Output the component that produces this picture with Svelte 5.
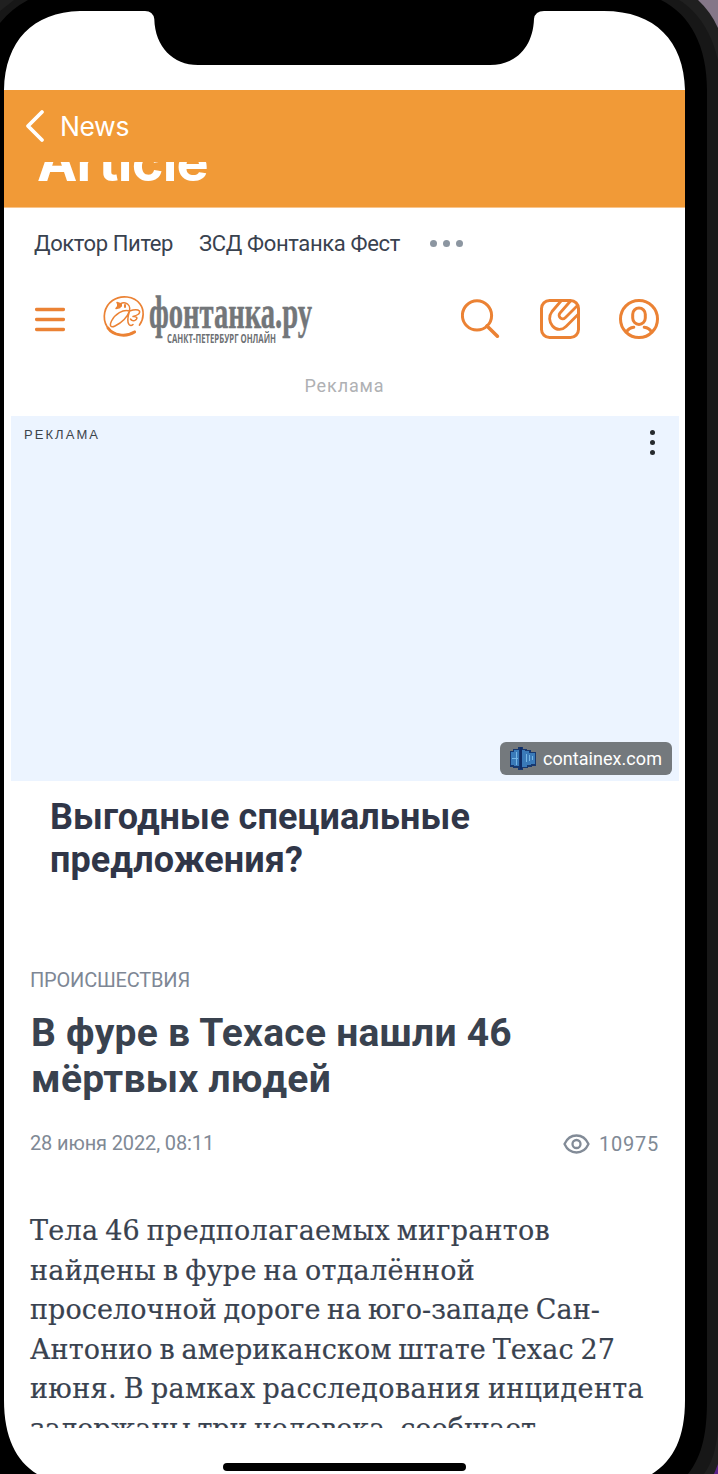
<script>
  const lines = [
    { text: 'Тела 46 предполагаемых мигрантов', width: 520 },
    { text: 'найдены в фуре на отдалённой', width: 445 },
    { text: 'проселочной дороге на юго-западе Сан-', width: 570 },
    { text: 'Антонио в американском штате Техас 27', width: 585 },
    { text: 'июня. В рамках расследования инцидента', width: 614 },
    { text: 'задержаны три человека, сообщает', width: 506 }
  ];

  // Spreads the letters of a one-line text to the given width.
  function fit(node, width) {
    const natural = node.getBoundingClientRect().width;
    const gaps = node.textContent.length;
    node.style.letterSpacing = `${(width - natural) / gaps}px`;
  }
</script>

<div class="phone">
  <div class="screen">
    <header class="nav">
      <div class="back">
        <svg width="20" height="34" viewBox="0 0 20 34"><path d="M17 3 3 17l14 14" fill="none" stroke="#fff" stroke-width="3.8" stroke-linecap="round" stroke-linejoin="round" /></svg>
        <span use:fit={69}>News</span>
      </div>
      <div class="title"><span use:fit={171}>Article</span></div>
    </header>

    <nav class="links">
      <span class="l1" use:fit={139}>Доктор Питер</span>
      <span use:fit={201}>ЗСД Фонтанка Фест</span>
      <i class="dots"><b></b><b></b><b></b></i>
    </nav>

    <div class="brandbar">
      <svg class="burger" width="30" height="26" viewBox="0 0 30 26"><path d="M1.5 2.5h27M1.5 12.5h27M1.5 22.5h27" stroke="#eb8234" stroke-width="3.3" stroke-linecap="round" /></svg>
      <svg class="logo" width="212" height="54" viewBox="0 0 212 54">
        <g fill="none" stroke="#eb8234" stroke-linecap="round" stroke-linejoin="round">
          <path d="M36.500 32C41 26 41.500 17 37 11 31 3 18 1.500 9.500 7.500 1 13.500-1 25 4 33.500 10 43 23 44.500 32 38.500" stroke-width="1.700" />
          <path d="M5 35c5 7.500 18 9.500 26.500 4" stroke-width="3" />
          <path d="M26.500 18C20 16 12 21 8.500 28c-2.500 5-.5 7 3.500 5 6-3 12-8 14.500-15 3-1 8-2 10 0 1 3-3 4.500-6.500 5.500 4-.5 5 2 2.500 3.500-2 1.500-4 .5-5-1M26.500 18c-1.500 5-2.500 11-.5 13.500 1.500 1.500 3 1 4 0" stroke-width="1.500" />
          <path d="M26.500 18c1-4-1-7-4-8-2-.8-3.500-.3-5 .8L14 9.500l1.500 3-2.500 3 4-1" stroke-width="1.500" />
          <path d="M15 11h3v2h-3zM22 12v2" stroke-width="2" />
        </g>
        <text class="wordmark" x="46" y="35" textLength="163" lengthAdjust="spacingAndGlyphs">фонтанка.ру</text>
        <text class="tagline" x="64" y="49.5" textLength="109" lengthAdjust="spacingAndGlyphs">САНКТ-ПЕТЕРБУРГ ОНЛАЙН</text>
      </svg>
      <div class="tools">
        <svg width="40" height="40" viewBox="0 0 40 40" fill="none" stroke="#eb8234" stroke-width="3"><circle cx="16" cy="16.400" r="14.6" /><path d="m26 27 10.400 10.200" stroke-width="3.6" stroke-linecap="round" /></svg>
        <svg width="40" height="40" viewBox="0 0 40 40" fill="none" stroke="#eb8234" stroke-width="3"><rect x="1.500" y="1.500" width="37" height="37" rx="8" /><path d="M21 2 12 12.500c-3.500 4.500-3 10.500.5 14.500 4 4.500 9.500 4.500 13.500.5L38 15.500M30.500 2 20 14c-3 3.500 2 8 5.500 4.500L38 6" stroke-width="2.800" /></svg>
        <svg width="40" height="40" viewBox="0 0 40 40" fill="none" stroke="#eb8234" stroke-width="3"><circle cx="20" cy="20" r="18.500" /><rect x="13.700" y="9" width="12.600" height="16.400" rx="6.300" /><path d="M7.500 33c1.500-2.800 4-4.300 7.300-4.700M32.500 33c-1.500-2.800-4-4.300-7.300-4.700" stroke-linecap="round" /></svg>
      </div>
    </div>

    <div class="adlabel"><span use:fit={80}>Реклама</span></div>

    <section class="ad">
      <div class="adtop">
        <span use:fit={76}>РЕКЛАМА</span>
        <i class="kebab"><b></b><b></b><b></b></i>
      </div>
      <div class="domain">
        <svg width="28" height="24" viewBox="0 0 28 24" shape-rendering="crispEdges">
          <path d="M1 5h3V3h5V1h5v2h4v1h4v2h5v14h-4v1h-4v1h-5v2H9v-2H4v-1H1z" fill="#17386f" />
          <path d="M2 6h3V4h5v16H5v-1H2zM13 4h3v1h4v2h6v11h-4v1h-4v2h-5z" fill="#3a7ab9" />
          <path d="M7 6v13M3 12h6M17 8v8M20 9v6M23 10v4" stroke="#75b5e5" />
          <path d="M11.500 1v22" stroke="#102c66" stroke-width="2" />
        </svg>
        <span use:fit={119}>containex.com</span>
      </div>
    </section>

    <h2><span use:fit={420}>Выгодные специальные</span><br /><span use:fit={253}>предложения?</span></h2>

    <article>
      <div class="rubric"><span use:fit={160}>ПРОИСШЕСТВИЯ</span></div>
      <h1><span use:fit={481}>В фуре в Техасе нашли 46</span><br /><span use:fit={300}>мёртвых людей</span></h1>
      <div class="meta">
        <span class="date" use:fit={184}>28 июня 2022, 08:11</span>
        <div class="views">
          <svg width="27" height="20" viewBox="0 0 27 20" fill="none" stroke="#828b97" stroke-width="2.300"><path d="M1.500 10C4 4.500 8 1.500 13.500 1.500S23 4.500 25.500 10C23 15.500 19 18.500 13.500 18.500S4 15.500 1.500 10z" stroke-linejoin="round" /><circle cx="13.500" cy="10" r="4" /></svg>
          <span use:fit={60}>10975</span>
        </div>
      </div>
      <div class="story">
        {#each lines as line}
          <div><span use:fit={line.width}>{line.text}</span></div>
        {/each}
      </div>
    </article>
  </div>

  <svg class="frame" width="718" height="1474" viewBox="0 0 718 1474">
    <path fill="#000" fill-rule="evenodd" d="M0 0H718V1474H0Z M4 90C5 41 33 12 80 11H145Q153 11 154.300 19C155 47 173 65 198 65H490C516 65 533 47 534 19Q535 11 544 11H604C655 11 684 41 685 90V1400C685 1437 674 1460 652 1474H37C16 1461 4 1437 4 1400Z" />
    <path fill="#171717" d="M661 0C691 15 707 47 707 90V1400C707 1431 703 1455 688 1474H718V0Z" />
    <path fill="#202020" d="M679 0C699 12 712 34 718 60V0ZM718 1430C716 1450 712 1463 704 1474H718Z" />
    <path fill="#857788" d="M698 0Q711 12 718 28V0Z" />
    <path fill="#5b2189" d="M718 1464L714 1474H718Z" />
    <path fill="#171717" d="M0 0H28Q11 9 0 23Z" />
    <path fill="#202020" d="M0 0H14L0 11Z" />
    <rect x="223" y="1463" width="243" height="8" rx="4" fill="#000" />
  </svg>
</div>

<style>
  :global(body) { margin: 0; background: #fff; overflow: hidden; }
  .phone { position: relative; width: 718px; height: 1474px; overflow: hidden; font-family: Roboto, sans-serif; color: #39424f; }
  .phone span { white-space: nowrap; display: inline-block; }
  .screen { display: flow-root; margin-left: 4px; width: 681px; height: 1428px; overflow: hidden; background: #fff; }
  .frame { position: absolute; inset: 0; display: block; }
  svg { display: block; flex: none; }
  .nav { box-sizing: border-box; margin-top: 90px; height: 118px; background: #f19a37; border-bottom: 1px solid #f9c58c; color: #fff; font-family: Inter, sans-serif; }
  .back { display: flex; align-items: center; height: 72px; padding-left: 21px; gap: 15px; font-size: 26.500px; }
  .title { display: flex; align-items: flex-start; height: 45px; overflow: hidden; padding-left: 33px; font-size: 54px; line-height: 54px; font-weight: 700; }
  .title span { margin-top: -27px; }
  .links { display: flex; align-items: center; height: 70px; padding-left: 30px; font-size: 22px; }
  .l1 { margin-right: 26px; }
  .dots { display: flex; gap: 6px; margin-left: 30px; }
  .dots b { width: 7px; height: 7px; border-radius: 50%; background: #8c96a1; }
  .brandbar { display: flex; align-items: flex-start; height: 88px; padding: 0 26px 0 31px; }
  .burger { margin-top: 29px; }
  .logo { margin: 15px 0 0 38px; overflow: visible; }
  .wordmark { font: bold 47px "Liberation Serif", serif; fill: #737679; stroke: #737679; stroke-width: .5px; }
  .tagline { font: bold 12px "Open Sans", sans-serif; fill: #6d7073; }
  .tools { display: flex; gap: 39px; margin: 21px 0 0 auto; }
  .adlabel { display: flex; justify-content: center; align-items: center; height: 38px; font-size: 18px; color: #afb1b4; }
  .ad { box-sizing: border-box; height: 365px; margin: 12px 6px 0 7px; padding: 10px 7px 6px 13px; background: #ecf4ff; display: flex; flex-direction: column; justify-content: space-between; }
  .adtop { display: flex; justify-content: space-between; font: 13px/17px "Liberation Sans", sans-serif; color: #3d444c; }
  .kebab { display: flex; flex-direction: column; gap: 5px; margin: 4px 17px 0 0; }
  .kebab b { width: 5px; height: 5px; border-radius: 50%; background: #262a2e; }
  .domain { box-sizing: border-box; align-self: flex-end; display: flex; align-items: center; width: 172px; height: 33px; padding: 0 0 1px 9px; gap: 6px; border-radius: 6px; background: #74797d; color: #fff; font-size: 18px; }
  h1, h2 { margin: 0; font-weight: 700; }
  h2 { height: 165px; padding: 15px 0 0 46px; font-size: 36px; line-height: 43px; color: #303648; }
  article { padding: 0 26px 0 26px; }
  .rubric { height: 42px; padding-top: 7px; font-size: 20px; line-height: 24px; color: #7e8795; }
  h1 { font-size: 39px; line-height: 46px; padding-left: 1px; }
  .meta { display: flex; justify-content: space-between; align-items: center; height: 44px; margin-top: 20px; font-size: 20px; color: #808995; }
  .date { margin-top: -2px; }
  .views { display: flex; align-items: center; gap: 9px; }
  .story { margin-top: 45px; font: 27px/39.5px "DejaVu Serif", serif; word-spacing: -2px; -webkit-text-stroke: .2px #39424f; }
  .story div { height: 39.5px; }
</style>
